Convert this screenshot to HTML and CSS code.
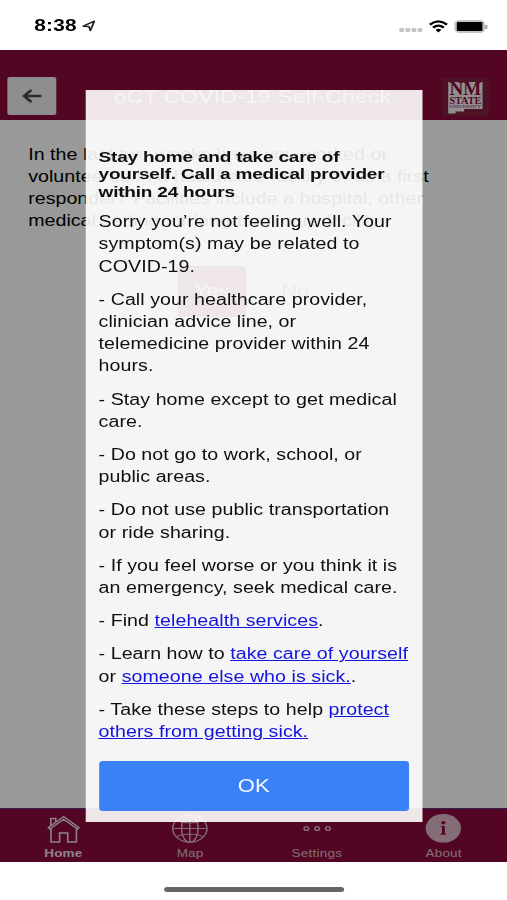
FILE: index.html
```html
<!DOCTYPE html>
<html lang="en">
<head>
  <meta charset="UTF-8">
  <meta name="viewport" content="width=device-width, initial-scale=1.0">
  <title>COVID-19 Self-Check</title>
  <link rel="stylesheet" href="styles.css">
</head>
<body>
  <div class="phone">
    <!-- Status bar -->
    <div class="status">
      <span class="clock">8:38</span>
      <svg class="location" width="11" height="12" viewBox="0 0 11 12"><path d="M1 6.2 L10 1.2 L6.8 10.6 L5.6 6.4 Z" fill="none" stroke="#222" stroke-width="1.5" stroke-linejoin="round"/></svg>
      <div class="signal"><i></i><i></i><i></i><i></i></div>
      <svg class="wifi" width="16" height="13" viewBox="0 0 16 13">
        <path d="M1 4.6 Q8 -1.8 15 4.6" fill="none" stroke="#000" stroke-width="2.2"/>
        <path d="M3.6 7.6 Q8 3.6 12.4 7.6" fill="none" stroke="#000" stroke-width="2.1"/>
        <path d="M5.6 9.8 Q8 7.7 10.4 9.8 L8 12.4 Z"/>
      </svg>
      <div class="battery"><b></b></div>
    </div>

    <div class="app">
      <header>
        <button class="back">
          <svg width="16" height="14" viewBox="0 0 16 14"><path d="M15 7 H2 M7 1.7 L1.7 7 L7 12.3" fill="none" stroke="#484848" stroke-width="2.4" stroke-linecap="round"/></svg>
        </button>
        <h1>oCT COVID-19 Self-Check</h1>
        <svg class="logo" width="38" height="38" viewBox="0 0 38 38">
          <rect width="38" height="38" fill="#80203f"/>
          <path d="M5 4 H33 V31 H18 V33.5 H11 V35.5 H5 Z" fill="#f4eef0"/>
          <g fill="#8a0a3c" font-family="Liberation Serif, serif" text-anchor="middle">
            <text x="19" y="17.5" font-size="18" font-weight="bold" textLength="26" lengthAdjust="spacingAndGlyphs">NM</text>
            <text x="19" y="25.6" font-size="10" font-weight="bold" textLength="26" lengthAdjust="spacingAndGlyphs">STATE</text>
            <text x="19" y="29.8" font-size="4.5" textLength="26" lengthAdjust="spacingAndGlyphs">UNIVERSITY</text>
          </g>
        </svg>
      </header>

      <main>
        <p>In the last two weeks have you worked or<br>volunteered in a healthcare facility or as a first<br>responder? Facilities include a hospital, other<br>medical setting, or long-term care facility.</p>
        <div class="choices">
          <button class="yes">Yes</button>
          <button class="no">No</button>
        </div>
      </main>

      <nav>
        <a class="tab active">
          <svg width="28" height="30" viewBox="0 0 28 30" fill="none" stroke="#fff" stroke-width="1.3"><path d="M1.5 14.5 L14 3.5 L26.5 14.5 L25.3 16 L14 6.3 L2.7 16 Z M3.5 12.5 V5.5 H7.5 V8.8 M3.6 15.5 V29 H10.7 V20 H17.3 V29 H24.4 V15.5"/></svg>
          <span>Home</span>
        </a>
        <a class="tab">
          <svg width="30" height="30" viewBox="0 0 30 30" fill="none" stroke="#fff" stroke-width="1.2"><ellipse cx="15" cy="15.5" rx="14" ry="13.7"/><ellipse cx="15" cy="15.5" rx="6.8" ry="13.7"/><path d="M15 2 V29 M1 15.5 H29 M4 7.5 Q15 12.5 26 7.5 M4 23.5 Q15 18.5 26 23.5"/></svg>
          <span>Map</span>
        </a>
        <a class="tab">
          <svg width="30" height="30" viewBox="0 0 30 30" fill="none" stroke="#fff" stroke-width="1.3"><circle cx="6.2" cy="15.5" r="1.9"/><circle cx="15" cy="15.5" r="1.9"/><circle cx="23.8" cy="15.5" r="1.9"/></svg>
          <span>Settings</span>
        </a>
        <a class="tab">
          <svg width="30" height="30" viewBox="0 0 30 30"><ellipse cx="15" cy="15.3" rx="14.4" ry="14.3" fill="#fff"/><circle cx="15" cy="9.7" r="1.7" fill="#8a0a3c"/><path d="M12.9 13 H16.2 V20.7 H17.3 V21.8 H12.7 V20.7 H13.9 V14.1 H12.9 Z" fill="#8a0a3c"/></svg>
          <span>About</span>
        </a>
      </nav>

      <div class="backdrop">
        <div class="modal">
          <h2>Stay home and take care of<br>yourself. Call a medical provider<br>within 24 hours</h2>
          <p>Sorry you’re not feeling well. Your<br>symptom(s) may be related to<br>COVID-19.</p>
          <p>- Call your healthcare provider,<br>clinician advice line, or<br>telemedicine provider within 24<br>hours.</p>
          <p>- Stay home except to get medical<br>care.</p>
          <p>- Do not go to work, school, or<br>public areas.</p>
          <p>- Do not use public transportation<br>or ride sharing.</p>
          <p>- If you feel worse or you think it is<br>an emergency, seek medical care.</p>
          <p>- Find <a href="#">telehealth services</a>.</p>
          <p>- Learn how to <a href="#">take care of yourself</a><br>or <a href="#">someone else who is sick.</a>.</p>
          <p>- Take these steps to help <a href="#">protect<br>others from getting sick.</a></p>
          <button class="ok">OK</button>
        </div>
      </div>
    </div>

    <div class="home-bar"><i></i></div>
  </div>
</body>
</html>
```
FILE: styles.css
```css
* { margin:0; padding:0; box-sizing:border-box; }
body { width:507px; height:900px; overflow:hidden; background:#fff; font-family:"Liberation Sans", Arial, sans-serif; }
button { border:0; font-family:inherit; }

/* 414px wide layout stretched to the window */
.phone { width:414px; height:900px; display:flex; flex-direction:column; transform:scaleX(1.22464); transform-origin:0 0; }

.status { height:50px; display:flex; align-items:center; padding:2px 18.5px 0 28px; }
.clock { font-size:17px; font-weight:bold; letter-spacing:.2px; width:38px; }
.location { margin-left:1px; }
.signal { display:flex; gap:1.5px; margin:8px 5px 0 auto; }
.signal i { width:3.5px; height:4px; border-radius:1px; background:#c4c4c4; }
.wifi { margin-right:5px; }
.battery { width:25px; height:13px; border:2px solid #c4c4c4; border-radius:4px; position:relative; }
.battery b { display:block; height:9px; background:#000; border-radius:1px; }
.battery::after { content:""; position:absolute; right:-4px; top:3px; width:1.5px; height:4px; background:#aaa; }

.app { height:812px; display:flex; flex-direction:column; position:relative; }
header { height:70px; background:#8a0a3c; display:flex; align-items:flex-start; padding:27px 15px 0 6px; }
.back { width:40px; height:38px; border-radius:2px; background:#ebebeb; display:flex; align-items:center; justify-content:center; }
header h1 { flex:1; text-align:center; color:#fff; font-size:19px; font-weight:normal; line-height:40px; padding-left:5px; }
.logo { margin-top:1px; }

main { flex:1; padding:24px 23px; background:#fff; }
main p { font-size:16px; line-height:22px; letter-spacing:.03px; white-space:nowrap; }
.choices { display:flex; justify-content:center; gap:12px; margin-top:34px; }
.choices button { width:56px; height:51px; border-radius:3px; font-size:18px; }
.choices .yes { background:#8a0a3c; color:#fff; }
.choices .no { background:#fff; border:1px solid #eee; color:#555; }

nav { height:54px; background:#8a0a3c; border-top:1px solid #5a3a80; display:flex; }
.tab { flex:1; display:flex; flex-direction:column; align-items:center; padding-top:4px; color:#fff; font-size:11px; opacity:.7; }
.tab span { margin-top:4px; line-height:13px; letter-spacing:.2px; }
.tab.active { opacity:.85; }
.tab.active span { font-weight:bold; }

.backdrop { position:absolute; inset:0; background:rgba(0,0,0,.4); padding:40px 69px 0 69.5px; }
.modal { height:731.5px; background:rgba(255,255,255,.9); padding:57.5px 11px 0; white-space:nowrap; color:#0f0f0f; }
.modal h2 { font-size:15.5px; line-height:17.6px; letter-spacing:-.16px; margin-bottom:11px; }
.modal p { font-size:16px; line-height:22.15px; letter-spacing:.05px; margin-bottom:11.1px; }
.modal a { color:#1414e0; }
.ok { width:100%; height:50px; margin-top:7px; border-radius:3px; background:#3a80f6; color:#f5f8ff; font-size:18px; }

.home-bar { height:38px; display:flex; align-items:center; justify-content:center; padding-top:16px; }
.home-bar i { width:147px; height:5px; border-radius:3px; background:#666; }
```
